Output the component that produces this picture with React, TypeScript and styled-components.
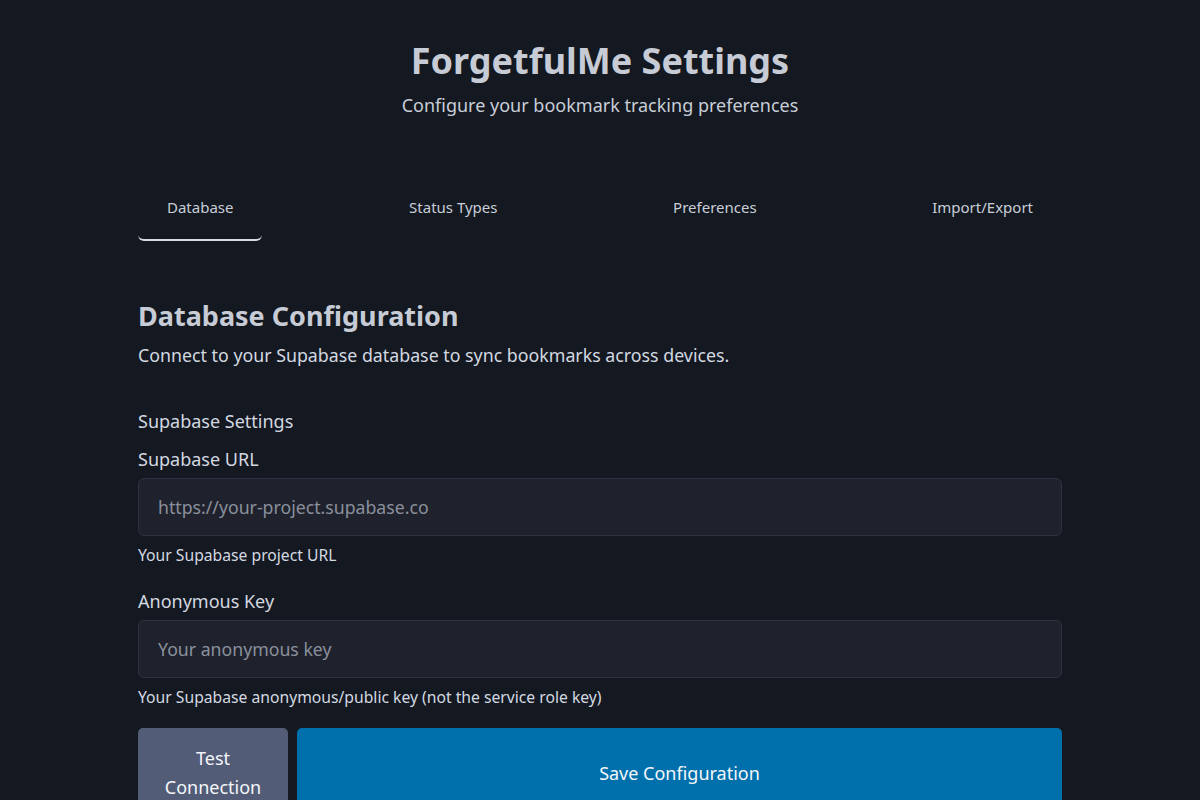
import React from "react";
import styled, { createGlobalStyle } from "styled-components";

const Global = createGlobalStyle`
  html, body { margin: 0; padding: 0; background: #141820; }
  body { font-family: "Noto Sans", "Open Sans", sans-serif; color: #d3d8e0; }
  * { box-sizing: border-box; }
`;

const Page = styled.div`
  width: 924px;
  margin: 0 auto;
  padding-top: 36px;
`;

const Header = styled.header`
  text-align: center;
  margin-bottom: 58px;
`;

const Title = styled.h1`
  margin: 0;
  font-size: 36px;
  font-weight: 700;
  color: #c6cbd5;
  line-height: 50px;
`;

const Subtitle = styled.p`
  margin: 6px 0 0;
  font-size: 18px;
  line-height: 27px;
  color: #c8ced8;
`;

const Tabs = styled.nav`
  display: flex;
  justify-content: space-between;
  margin-bottom: 55px;
`;

const Tab = styled.button<{ $active?: boolean }>`
  background: none;
  border: none;
  font-family: inherit;
  font-size: 15px;
  color: #c8ced8;
  padding: 19px 29px 21px;
  height: 64px;
  border-bottom: 2px solid ${(p) => (p.$active ? "#d6dbe3" : "transparent")};
  border-radius: 0 0 6px 6px;
  cursor: pointer;
`;

const SectionTitle = styled.h2`
  margin: 0;
  font-size: 27px;
  font-weight: 700;
  color: #c6cbd5;
  line-height: 40px;
`;

const SectionDesc = styled.p`
  margin: 6px 0 39px;
  font-size: 17.8px;
  line-height: 27px;
  color: #d3d8e0;
`;

const GroupTitle = styled.h3`
  margin: 0 0 11px;
  font-size: 18px;
  line-height: 27px;
  font-weight: 400;
  color: #d3d8e0;
`;

const Field = styled.div`
  display: flex;
  flex-direction: column;
  margin-bottom: 21px;
`;

const Label = styled.label`
  font-size: 18px;
  line-height: 27px;
  color: #d3d8e0;
  margin-bottom: 5px;
`;

const Input = styled.input`
  height: 58px;
  background: #1f222c;
  border: 1px solid #2d3142;
  border-radius: 6px;
  padding: 0 19px;
  font-family: "Noto Sans", sans-serif;
  font-size: 17.7px;
  color: #d3d8e0;
  outline: none;
  &::placeholder { color: #8a909c; }
`;

const Help = styled.small`
  margin-top: 7px;
  font-size: 15.7px;
  line-height: 24px;
  color: #d3d8e0;
`;

const Actions = styled.div`
  display: flex;
  gap: 9px;
  margin-top: -2px;
`;

const Button = styled.button<{ $primary?: boolean }>`
  font-family: inherit;
  font-size: 18px;
  line-height: 29px;
  color: #f4f6fa;
  border: none;
  border-radius: 5px;
  padding: 16px 20px;
  cursor: pointer;
  background: ${(p) => (p.$primary ? "#0070ad" : "#525c76")};
  width: ${(p) => (p.$primary ? "auto" : "150px")};
  flex: ${(p) => (p.$primary ? "1" : "none")};
`;

export default function App() {
  return (
    <>
      <Global />
      <Page>
        <Header>
          <Title>ForgetfulMe Settings</Title>
          <Subtitle>Configure your bookmark tracking preferences</Subtitle>
        </Header>
        <Tabs>
          <Tab $active>Database</Tab>
          <Tab>Status Types</Tab>
          <Tab>Preferences</Tab>
          <Tab>Import/Export</Tab>
        </Tabs>
        <SectionTitle>Database Configuration</SectionTitle>
        <SectionDesc>Connect to your Supabase database to sync bookmarks across devices.</SectionDesc>
        <GroupTitle>Supabase Settings</GroupTitle>
        <Field>
          <Label>Supabase URL</Label>
          <Input placeholder="https://your-project.supabase.co" />
          <Help>Your Supabase project URL</Help>
        </Field>
        <Field>
          <Label>Anonymous Key</Label>
          <Input placeholder="Your anonymous key" />
          <Help>Your Supabase anonymous/public key (not the service role key)</Help>
        </Field>
        <Actions>
          <Button>Test Connection</Button>
          <Button $primary>Save Configuration</Button>
        </Actions>
      </Page>
    </>
  );
}
